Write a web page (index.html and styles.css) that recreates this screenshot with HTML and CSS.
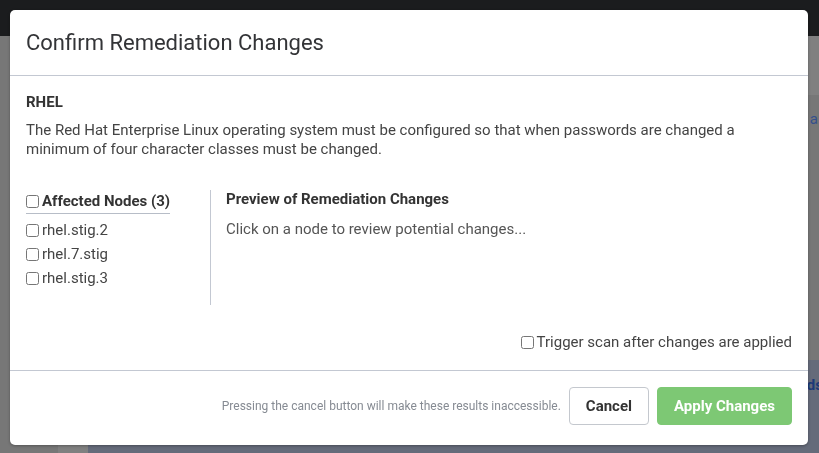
FILE: index.html
```html
<!DOCTYPE html>
<html lang="en">
<head>
    <meta charset="UTF-8">
    <title>Confirm Remediation Changes</title>
    <link rel="stylesheet" href="styles.css">
</head>
<body>
<div class="page">
    <div class="topbar"></div>
    <div class="content">
        <div class="side"></div>
        <div class="main">
            <div class="main-head"></div>
            <div class="main-body">
                <div class="gutter"></div>
                <div class="panels">
                    <div class="panel-top"><span class="frag">ar</span></div>
                    <div class="panel-bottom"><span class="frag strong">ds</span></div>
                </div>
            </div>
        </div>
    </div>
</div>

<div class="backdrop">
    <div class="modal">
        <div class="modal-header">
            <h4 class="modal-title">Confirm Remediation Changes</h4>
        </div>
        <div class="modal-body">
            <div class="rule-name">RHEL</div>
            <p class="rule-desc">The Red Hat Enterprise Linux operating system must be configured so that when passwords are changed a minimum of four character classes must be changed.</p>

            <div class="columns">
                <div class="nodes">
                    <label class="nodes-head"><input type="checkbox">Affected Nodes (3)</label>
                    <ul>
                        <li><label><input type="checkbox">rhel.stig.2</label></li>
                        <li><label><input type="checkbox">rhel.7.stig</label></li>
                        <li><label><input type="checkbox">rhel.stig.3</label></li>
                    </ul>
                </div>
                <div class="preview">
                    <div class="preview-title">Preview of Remediation Changes</div>
                    <div class="preview-text">Click on a node to review potential changes...</div>
                </div>
            </div>

            <div class="trigger">
                <label><input type="checkbox">Trigger scan after changes are applied</label>
            </div>
        </div>
        <div class="modal-footer">
            <span class="note">Pressing the cancel button will make these results inaccessible.</span>
            <button class="btn btn-cancel">Cancel</button>
            <button class="btn btn-apply">Apply Changes</button>
        </div>
    </div>
</div>
</body>
</html>
```
FILE: styles.css
```css
body{margin: 0;padding: 0;font-family: Roboto, "Liberation Sans", sans-serif;overflow: hidden}
ul{margin: 0;padding: 0}
ul li{list-style-type: none}

/* page behind the dialog (already dimmed) */
.page{height: 453px;display: flex;flex-direction: column;}
.topbar{height: 36px;background-color: #1b1c1e;}
.content{flex: 1;display: flex;}
.side{width: 58px;background-color: #777;}
.main{flex: 1;display: flex;flex-direction: column;}
.main-head{height: 59px;background-color: #808080;}
.main-body{flex: 1;display: flex;}
.gutter{width: 30px;background-color: #808080;}
.panels{flex: 1;display: flex;flex-direction: column;}
.panel-top{height: 265px;background-color: #777;text-align: right;}
.panel-bottom{flex: 1;background-color: #656b7a;text-align: right;}
.frag{display: inline-block;color: #34508c;font-size: 15px;margin-right: -4px;}
.panel-top .frag{margin-top: 15px;}
.panel-bottom .frag{margin-top: 16px;font-weight: bold;color: #1d3a78;}

/* dialog */
.backdrop{position: fixed;top: 0;left: 0;right: 0;bottom: 0;padding: 10px;}
.modal{
    width: 798px;
    background-color: #fff;
    border-radius: 5px;
    box-shadow: 0 1px 3px rgba(0,0,0,.3);
    color: #3b3b3d;
}
.modal-header{
    padding: 16px;
    border-bottom: 1px solid #c3c8d2;
}
.modal-title{margin: 0;font-size: 22px;font-weight: 400;line-height: 33px;color: #333437;}

.modal-body{padding: 17px 16px 18px;font-size: 15px;line-height: 19px;}
.rule-name{font-weight: bold;color: #333;}
.rule-desc{margin: 9px 0 0;color: #444;}

.columns{display: flex;margin-top: 31px;}
.nodes{width: 184px;border-right: 1px solid #c3c8d2;}
.nodes label{display: inline-flex;align-items: center;}
.nodes input{margin: 0 3px 0 0;width: 13px;height: 13px;}
.nodes-head{
    font-weight: bold;
    line-height: 23px;
    border-bottom: 1px solid #b7bdc7;
    color: #333;
}
.nodes ul{margin-top: 4px;}
.nodes li{display: flex;height: 24px;align-items: center;color: #444;}

.preview{flex: 1;padding-left: 15px;min-height: 115px;}
.preview-title{font-weight: bold;color: #333;}
.preview-text{margin-top: 11px;color: #555;}

.trigger{display: flex;justify-content: flex-end;margin-top: 28px;color: #444;}
.trigger label{display: inline-flex;align-items: center;}
.trigger input{margin: 0 3px 0 0;width: 13px;height: 13px;}

.modal-footer{
    display: flex;
    justify-content: flex-end;
    align-items: center;
    gap: 8px;
    padding: 16px 16px 20px;
    border-top: 1px solid #c3c8d2;
}
.note{font-size: 12px;color: #868b93;}
.btn{
    height: 38px;
    padding: 0 16px;
    border-radius: 4px;
    font-family: inherit;
    font-size: 15px;
    font-weight: bold;
}
.btn-cancel{background-color: #fff;border: 1px solid #c4c8ce;color: #333;}
.btn-apply{background-color: #7dc874;border: 1px solid #7dc874;color: #fff;}
```
